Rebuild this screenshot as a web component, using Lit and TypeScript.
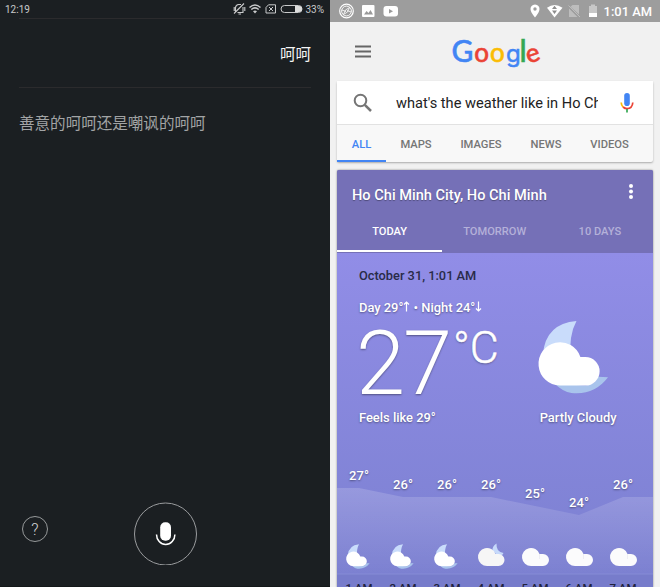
import { LitElement, html, css, svg } from "lit";
import { customElement, property } from "lit/decorators.js";
import { styleMap } from "lit/directives/style-map.js";

@customElement("assistant-pane")
class AssistantPane extends LitElement {
  static styles = css`
    :host { display: flex; flex-direction: column; width: 330px; height: 587px; background: #1b1f22; color: #ccc; box-sizing: border-box; border-bottom: 1px solid #14181a; }
    .status { display: flex; height: 18px; padding: 0 6px 0 5px; align-items: center; font: 10px/18px Roboto, sans-serif; color: #c9cacb; }
    .time { flex: 1; padding-top: 1px; }
    .status svg { display: block; }
    .pct { padding: 1px 0 0 2px; }
    .rule { height: 1px; margin: 0 19px; background: #2b2b2d; }
    .said { height: 68px; display: flex; justify-content: flex-end; align-items: center; padding-right: 19px; font: 400 15.500px/24px "Noto Sans CJK SC", sans-serif; color: #f4f4f4; }
    .reply { flex: 1; padding: 22px 19px 0; font: 400 15.550px/24px "Noto Sans CJK SC", sans-serif; color: #a2a4a5; }
    .controls { height: 84px; display: grid; grid-template-columns: 134px 63px 1fr; }
    .help { width: 24px; height: 24px; border: 1px solid #96999a; border-radius: 50%; margin: 14px 0 0 22px; font: 300 16px/25px Roboto, sans-serif; text-align: center; color: #d5d5d5; }
    .mic { width: 63px; height: 63px; }
  `;
  render() {
    return html`
      <div class="status"><span class="time">12:19</span>
        <svg width="70" height="14" viewBox="0 0 70 14" fill="none" stroke="#c9cacb">
          <path d="M2.500 9.500V5.500Q3 2 6.500 2.500H8M10 5V10.500H4.500M5.500 12H8M1 11.500L11 1.500M1.200 5V9M11.800 5V9" stroke-width="1.100"/>
          <path d="M16.500 5.500Q22 .5 27.500 5.500M18.300 7.500Q22 4.300 25.700 7.500" stroke-width="1.500"/>
          <path d="M20 9.200Q22 7.600 24 9.200L22 11.500Z" fill="#c9cacb" stroke="none"/>
          <path d="M35.500 2.800H42.500V11H33V5.500ZM36 5L40 9M40 5L36 9"/>
          <rect x="48" y="3.500" width="21" height="7" rx="3.500"/>
          <path d="M62 4H66A3 3 0 0 1 66 10H62Z" fill="#ddd" stroke="none"/>
        </svg><span class="pct">33%</span></div>
      <div class="rule"></div>
      <div class="said">呵呵</div>
      <div class="rule"></div>
      <div class="reply">善意的呵呵还是嘲讽的呵呵</div>
      <div class="controls">
        <div class="help">?</div>
        <svg class="mic" viewBox="0 0 63 63" fill="none">
          <circle cx="31.500" cy="32" r="31" stroke="#9a9c9e"/>
          <rect x="26.200" y="20.300" width="10.800" height="18.500" rx="5" fill="#fff"/>
          <path d="M22.500 32.500A9.200 10 0 0 0 40.900 32.500" stroke="#fff" stroke-width="1.500"/>
        </svg>
      </div>`;
  }
}

@customElement("weather-icon")
class WeatherIcon extends LitElement {
  @property() kind = "night";
  static styles = css`
    :host, svg { display: block; }
    svg { width: 100%; height: 100%; overflow: visible; }
  `;
  render() {
    if (this.kind === "night")
      return html`<svg viewBox="0 0 72 74">
        <path fill="#c9dcfb" d="M39 .5Q8 3 5 34V40H33Q31 15 39 .5Z"/>
        <path fill="#a9c4ec" d="M17 64Q25 72 34 73.500Q57 76 71 57.500L61 57Q57 66 48 66Z"/>
        <path fill="#fff" d="M22 66A21.800 22 0 1 1 43 37H48A14.500 14.500 0 0 1 48 66Z"/></svg>`;
    if (this.kind === "mixed")
      return html`<svg viewBox="0 0 27 23">
        <path fill="#c6d9fa" d="M18.500 -.5Q14 2 14.500 7L20 11.500L23.500 11.500Q24.700 10.500 25.500 9Q18 8 18.500 -.5Z"/>
        <path fill="#f6f6f6" d="M9 22A9 9 0 1 1 17.500 10H20.500A6 6 0 0 1 20.500 22Z"/></svg>`;
    return html`<svg viewBox="0 0 27 23">
        <path fill="#fbfbfc" d="M9 22A9 9 0 1 1 17.500 10H21A6 6 0 0 1 21 22Z"/>
        <path fill="none" stroke="#eeeef3" d="M17.500 10V15"/></svg>`;
  }
}

@customElement("weather-card")
class WeatherCard extends LitElement {
  hours = [
    { t: 27, h: "1 AM", k: "night" }, { t: 26, h: "2 AM", k: "night" }, { t: 26, h: "3 AM", k: "night" },
    { t: 26, h: "4 AM", k: "mixed" }, { t: 25, h: "5 AM", k: "day" }, { t: 24, h: "6 AM", k: "day" }, { t: 26, h: "7 AM", k: "day" },
  ];
  static styles = css`
    :host { display: block; width: 315.500px; height: 418px; overflow: hidden; border-radius: 2px 2px 0 0; color: #fff; font-family: Roboto, sans-serif; box-shadow: 0 0 2px #777; background: linear-gradient(#7570b7 0 83px, #918de7 83px, #7b80d0 418px); }
    .head { height: 83px; background: #7570b7; text-shadow: 0 1px 1px #0005; }
    .title { display: flex; height: 43px; justify-content: space-between; padding: 0 18px 0 15px; }
    .city { font-weight: 500; font-size: 14.600px; line-height: 51px; }
    .dots { width: 8px; height: 18px; margin-top: 13px; }
    .tabs { display: grid; grid-template-columns: repeat(3, 1fr); height: 40px; box-sizing: border-box; text-align: center; font-weight: 500; font-size: 11.100px; line-height: 37px; color: #b4b1d9; text-shadow: none; }
    .on { color: #fff; border-bottom: 2px solid #fff; height: 37px; }
    .body { height: 335px; text-shadow: 0 1px 2px #0006; font-size: 13px; font-weight: 500; }
    .date { height: 40px; line-height: 46px; padding-left: 22px; font-size: 12.800px; color: #292b48; text-shadow: none; }
    .range { height: 28px; line-height: 30px; padding-left: 22px; font-size: 12.900px; }
    .range svg { width: 7px; height: 11px; }
    .now { display: flex; height: 84px; padding-left: 19px; }
    .temp { width: 97px; font-size: 88.500px; line-height: 87px; letter-spacing: -2px; font-weight: 300; }
    .unit { width: 85px; font-size: 44.500px; font-weight: 300; line-height: 55px; -webkit-text-stroke: .5px #fff; }
    .big { width: 71px; height: 74px; margin-top: -1px; }
    .desc { display: flex; height: 54px; padding: 0 36px 0 22px; justify-content: space-between; font-size: 12.900px; line-height: 26px; }
    .chart { display: grid; grid-template-columns: repeat(7, 44px); height: 129px; position: relative; font-size: 13px; text-align: center; }
    .area { position: absolute; inset: 0; width: 316px; height: 129px; }
    .hour { position: relative; display: grid; grid-template-rows: 85px 37px 18px; height: 140px; justify-items: center; }
    .deg { line-height: 16px; }
    .small { width: 24px; height: 25px; margin: 0 3px 0 0; }
    .small.wide { width: 27px; height: 23px; margin: 0 0 0 1px; }
    .label { color: #20223c; font-size: 11.500px; line-height: 14px; text-shadow: none; }
  `;
  render() {
    const y = (t: number) => 29 + (27 - t) * 9;
    const points = this.hours.map((d, i) => `${22 + i * 44},${y(d.t)}`).join(" ");
    const arrow = (d: string) => html`<svg viewBox="0 0 7 11" fill="none" stroke="#fff" stroke-width="1.200">${svg`<path d=${d}/>`}</svg>`;
    return html`
      <div class="head">
        <div class="title"><span class="city">Ho Chi Minh City, Ho Chi Minh</span>
          <svg class="dots" viewBox="0 0 8 18" fill="#fff"><circle cx="4" cy="3" r="2"/><circle cx="4" cy="8.500" r="2"/><circle cx="4" cy="14" r="2"/></svg></div>
        <div class="tabs"><div class="on">TODAY</div><div>TOMORROW</div><div>10 DAYS</div></div>
      </div>
      <div class="body">
        <div class="date">October 31, 1:01 AM</div>
        <div class="range">Day 29°${arrow("M3.500 10.500V1M1 3.500L3.500 1L6 3.500")} • Night 24°${arrow("M3.500 .5V10M1 7.500L3.500 10L6 7.500")}</div>
        <div class="now"><span class="temp">27</span><span class="unit">°C</span><weather-icon class="big" kind="night"></weather-icon></div>
        <div class="desc"><span>Feels like 29°</span><span>Partly Cloudy</span></div>
        <div class="chart">
          <svg class="area" viewBox="0 0 316 129">
            <defs><linearGradient id="fade" x1="0" y1="0" x2="0" y2="1"><stop stop-color="#fff" stop-opacity=".17"/><stop offset="1" stop-color="#fff" stop-opacity="0"/></linearGradient></defs>
            <polygon fill="url(#fade)" points="0,29 ${points} 316,38 316,115 0,115"/>
            <rect y="115" width="316" height="14" fill="#777ccb"/>
            <path d="M0 115H316" stroke="#868bd6"/>
          </svg>
          ${this.hours.map((d) => html`<div class="hour">
            <span class="deg" style=${styleMap({ paddingTop: `${y(d.t) - 20}px` })}>${d.t}°</span>
            <weather-icon class="small ${d.k === "night" ? "" : "wide"}" kind=${d.k}></weather-icon>
            <span class="label">${d.h}</span></div>`)}
        </div>
      </div>`;
  }
}

@customElement("search-pane")
class SearchPane extends LitElement {
  static styles = css`
    :host { display: block; width: 330px; height: 587px; overflow: hidden; background: #f1f1f1; font-family: Roboto, sans-serif; }
    .status { display: flex; align-items: center; height: 22px; background: #9d9d9d; color: #fff; font-weight: 500; font-size: 12.900px; padding: 0 8px; }
    .status svg { display: block; }
    .gap { flex: 1; }
    .clock { padding-left: 6px; line-height: 23px; }
    .top { display: flex; height: 59px; align-items: center; }
    .menu { width: 18px; height: 14px; margin: 0 79px 0 24px; }
    .logo { display: grid; grid-template-columns: 23px 15.500px 16px 15.500px 4px 14px; align-items: baseline; justify-items: center; font: 500 26px/38px Lato, sans-serif; height: 42px; }
    .cap { font-size: 30px; }
    .b { color: #4285f4; -webkit-text-stroke: .5px #4285f4; }
    .r { color: #ea4335; -webkit-text-stroke: .5px #ea4335; }
    .y { color: #fbbc05; -webkit-text-stroke: .5px #fbbc05; }
    .g { color: #34a853; -webkit-text-stroke: .5px #34a853; }
    .low { font-family: Inter, sans-serif; font-weight: 400; font-size: 24px; }
    .tilt { transform: rotate(-18deg); }
    .box { width: 315.500px; margin-left: 7px; border-radius: 2px; background: #f8f8f8; box-shadow: 0 1px 2px #aaa; }
    .query { display: flex; align-items: center; height: 43px; background: #fff; border-bottom: 1px solid #e2e2e2; }
    .lens { width: 20px; height: 20px; margin: 0 23px 0 16px; }
    .text { width: 202px; overflow: hidden; white-space: nowrap; font-size: 14.600px; line-height: 24px; color: #222; }
    .voice { width: 14px; height: 20px; margin-left: 22px; }
    .tabs { display: flex; height: 37px; color: #757575; font-weight: 500; font-size: 11.200px; line-height: 39px; text-align: center; }
    .all { width: 49px; box-sizing: border-box; color: #4285f4; border-bottom: 2px solid #4285f4; }
    .maps { width: 60px; } .images { width: 70px; } .news { width: 60px; } .videos { width: 67px; }
    weather-card { margin: 7.500px 0 0 7px; }
  `;
  render() {
    return html`
      <div class="status">
        <svg width="62" height="16" viewBox="0 0 62 16" fill="none">
          <circle cx="8.500" cy="8" r="6.800" stroke="#fff" stroke-width="1.200"/><circle cx="8.500" cy="8" r="4.900" stroke="#fff" stroke-width=".9"/><path d="M11.500 4.500L9.500 9L5.500 11.500L7.500 7ZM4 7L8 8.500M9 7.500L13 9" stroke="#fff" stroke-width=".8"/>
          <rect x="24" y="2" width="12.500" height="12" rx="1" fill="#fff"/><path d="M26 11.500L28.500 8L30.500 10L32.500 7L35 11.500Z" fill="#999"/>
          <rect x="45.500" y="3" width="14.500" height="10.500" rx="3" fill="#fff"/><path d="M51 6L55 8.200L51 10.500Z" fill="#999"/>
        </svg><span class="gap"></span>
        <svg width="69" height="16" viewBox="0 0 69 16">
          <path fill="#fff" fill-rule="evenodd" d="M6 1.500C3 1.500 1.500 3.700 1.500 6Q1.500 9 6 14.500Q10.500 9 10.500 6C10.500 3.700 9 1.500 6 1.500ZM6 4.300A1.700 1.700 0 1 1 6 7.700A1.700 1.700 0 1 1 6 4.300Z"/>
          <path fill="#fff" d="M18 4.800Q25.500-1 33.500 4.800L25.500 14.500Z"/><path fill="#8d8d8d" d="M25.500 2.800L28 6H23ZM25.500 11L23 7.500H28Z"/>
          <path fill="#bdbdbd" d="M43.500 2H50V11.500L41.500 3.800ZM40 5.500L48.500 14H40Z"/><path d="M39.500 2.500L51 14" stroke="#bdbdbd"/>
          <path fill="#c7c7c7" d="M60 3H62V1.500H66V3H68V14H60Z"/><path fill="#fff" d="M60 10H68V14H60Z"/>
        </svg><span class="clock">1:01 AM</span>
      </div>
      <div class="top"><svg class="menu" viewBox="0 0 18 14" stroke="#666" stroke-width="2"><path d="M1 1.500H17M1 6.500H17M1 11.500H17"/></svg>
        <div class="logo"><span class="b cap">G</span><span class="r">o</span><span class="y">o</span><span class="b low">g</span><span class="g cap">l</span><span class="r tilt">e</span></div></div>
      <div class="box">
        <div class="query">
          <svg class="lens" viewBox="0 0 20 20" fill="none" stroke="#757575"><circle cx="7.500" cy="7.500" r="5.800" stroke-width="2"/><path d="M11.800 11.800L18 18" stroke-width="2.500"/></svg>
          <span class="text">what's the weather like in Ho Chi</span>
          <svg class="voice" viewBox="0 0 14 20" fill="none" stroke-width="1.700"><rect x="4.200" y="0" width="5.600" height="13" rx="2.800" fill="#4285f4"/><path stroke="#fbbc05" d="M1.200 9.500Q1.300 12 3 14"/><path stroke="#ea4335" d="M3 14Q5 15.700 7 15.700Q12.400 15.500 12.800 9.500"/><path stroke="#34a853" d="M7 16V19.500"/></svg>
        </div>
        <div class="tabs"><span class="all">ALL</span><span class="maps">MAPS</span><span class="images">IMAGES</span><span class="news">NEWS</span><span class="videos">VIDEOS</span></div>
      </div>
      <weather-card></weather-card>`;
  }
}

@customElement("app-root")
class AppRoot extends LitElement {
  static styles = css`
    :host { display: grid; grid-template-columns: 330px 330px; width: 660px; height: 587px; overflow: hidden; background: #f1f1f1; }
  `;
  render() {
    return html`<assistant-pane></assistant-pane><search-pane></search-pane>`;
  }
}
